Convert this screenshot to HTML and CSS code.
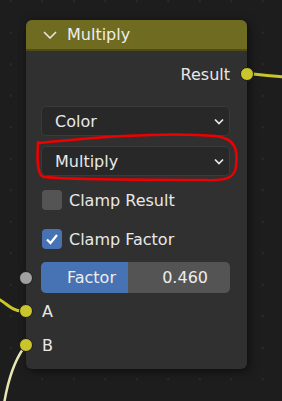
FILE: index.html
```html
<!DOCTYPE html>
<html><head>
<meta charset="utf-8">
<title>Multiply node</title>
<link rel="stylesheet" href="styles.css">
</head>
<body>
<div class="canvas">
  <svg class="links" width="282" height="401" viewBox="0 0 282 401">
    <path d="M253 74 C262 75, 272 76, 284 77" class="link" />
    <path d="M-6 297 C6 301, 10 311, 22 311" class="link" />
    <path d="M23 349 C14 362, 8 380, 4 404" class="link pale" />
  </svg>

  <div class="node">
    <div class="node-header">
      <svg class="hchev" width="14" height="8" viewBox="0 0 14 8"><path d="M1 1 L7 7 L13 1" /></svg>
      <span>Multiply</span>
    </div>
    <div class="node-body">
      <div class="row out">Result<span class="socket right"></span></div>

      <div class="select first">Color
        <svg class="chev" width="10" height="7" viewBox="0 0 10 7"><path d="M1 1.5 L5 5.5 L9 1.5" /></svg>
      </div>
      <div class="select second">Multiply
        <svg class="chev" width="10" height="7" viewBox="0 0 10 7"><path d="M1 1.5 L5 5.5 L9 1.5" /></svg>
      </div>

      <div class="row check first-check"><span class="box"></span>Clamp Result</div>
      <div class="row check second-check"><span class="box on">
        <svg width="14" height="12" viewBox="0 0 14 12"><path d="M2 6.5 L5.5 10 L12 2" /></svg>
      </span>Clamp Factor</div>

      <div class="slider">
        <span class="socket left grey"></span>
        <div class="fill" style="width:46%"></div>
        <span class="slabel">Factor</span>
        <span class="svalue">0.460</span>
      </div>

      <div class="row in a"><span class="socket left"></span>A</div>
      <div class="row in b"><span class="socket left"></span>B</div>
    </div>
  </div>

  <svg class="marks" width="282" height="401" viewBox="0 0 282 401">
    <path d="M39 143 C80 139, 160 131, 216 136 C236 139, 238 150, 236 166 C235 178, 226 181, 204 180 C160 179, 90 181, 44 177 C37 176, 37 160, 38 142" />
  </svg>
</div>
</body>
</html>
```

FILE: styles.css
```css
html, body {
  margin: 0;
  background: #1d1d1d;
}
.canvas {
  position: relative;
  width: 282px;
  height: 401px;
  overflow: hidden;
  background-color: #1d1d1d;
  background-image: radial-gradient(circle, #2b2b2b 1px, transparent 1.4px);
  background-size: 31.5px 31.5px;
  background-position: -5px 17px;
  font-family: "DejaVu Sans", sans-serif;
  font-size: 16px;
  color: #e8e8e8;
  padding-top: 20px;
  box-sizing: border-box;
}
.links, .marks {
  position: absolute;
  left: 0;
  top: 0;
  pointer-events: none;
}
.links { z-index: 0; }
.marks { z-index: 3; }
.link {
  fill: none;
  stroke: #c9c52b;
  stroke-width: 3;
}
.link.pale {
  stroke: #e9e6b4;
  stroke-width: 2.5;
}
.marks path {
  fill: none;
  stroke: #e00;
  stroke-width: 2.5;
  stroke-linecap: round;
}

.node {
  position: relative;
  z-index: 1;
  margin-left: 26px;
  width: 221px;
  height: 349px;
  background: #303030;
  border-radius: 6px;
  box-shadow: 2px 2px 8px rgba(0,0,0,.55);
  display: flex;
  flex-direction: column;
}
.node-header {
  height: 29px;
  background: #6f6b20;
  border-bottom: 2px solid #4f4c18;
  border-radius: 6px 6px 0 0;
  display: flex;
  align-items: center;
  padding-left: 17px;
  gap: 10px;
  color: #eeeeee;
}
.hchev path {
  fill: none;
  stroke: #e8e6d8;
  stroke-width: 1.6;
}
.node-body {
  position: relative;
  padding: 0 17px 0 15px;
  display: flex;
  flex-direction: column;
}
.row {
  position: relative;
  height: 20px;
  display: flex;
  align-items: center;
}
.row.out {
  justify-content: flex-end;
  margin-top: 13px;
}
.socket {
  position: absolute;
  width: 12px;
  height: 12px;
  border-radius: 50%;
  background: #c9c52b;
  border: 1px solid #1a1a1a;
  top: 50%;
  transform: translate(-50%, -50%);
}
.socket.right { left: calc(100% + 17px); }
.socket.left { left: -15px; }
.socket.grey { background: #a1a1a1; }

.select {
  position: relative;
  height: 28px;
  background: #282828;
  border: 1px solid #3a3a3a;
  border-radius: 5px;
  display: flex;
  align-items: center;
  justify-content: space-between;
  padding: 0 5px 0 13px;
}
.select.first { margin-top: 22px; }
.select.second { margin-top: 10px; }
.chev path {
  fill: none;
  stroke: #e8e8e8;
  stroke-width: 1.7;
}

.check { gap: 7px; }
.check.first-check { margin-top: 14px; }
.check.second-check { margin-top: 19px; }
.box {
  width: 20px;
  height: 20px;
  margin-left: 1px;
  border-radius: 4px;
  background: #545454;
  display: flex;
  align-items: center;
  justify-content: center;
}
.box.on { background: #4772b3; }
.box svg path {
  fill: none;
  stroke: #fff;
  stroke-width: 2.2;
}

.slider {
  position: relative;
  margin-top: 13px;
  height: 31px;
  background: #545454;
  border-radius: 5px;
  display: flex;
  align-items: center;
  justify-content: space-between;
  padding: 0 22px 0 26px;
  color: #eeeeee;
}
.slider .fill {
  position: absolute;
  left: 0;
  top: 0;
  bottom: 0;
  background: #4772b3;
  border-radius: 5px 0 0 5px;
}
.slabel, .svalue { position: relative; }

.row.in { padding-left: 1px; }
.row.a { margin-top: 8px; }
.row.b { margin-top: 14px; }
```
